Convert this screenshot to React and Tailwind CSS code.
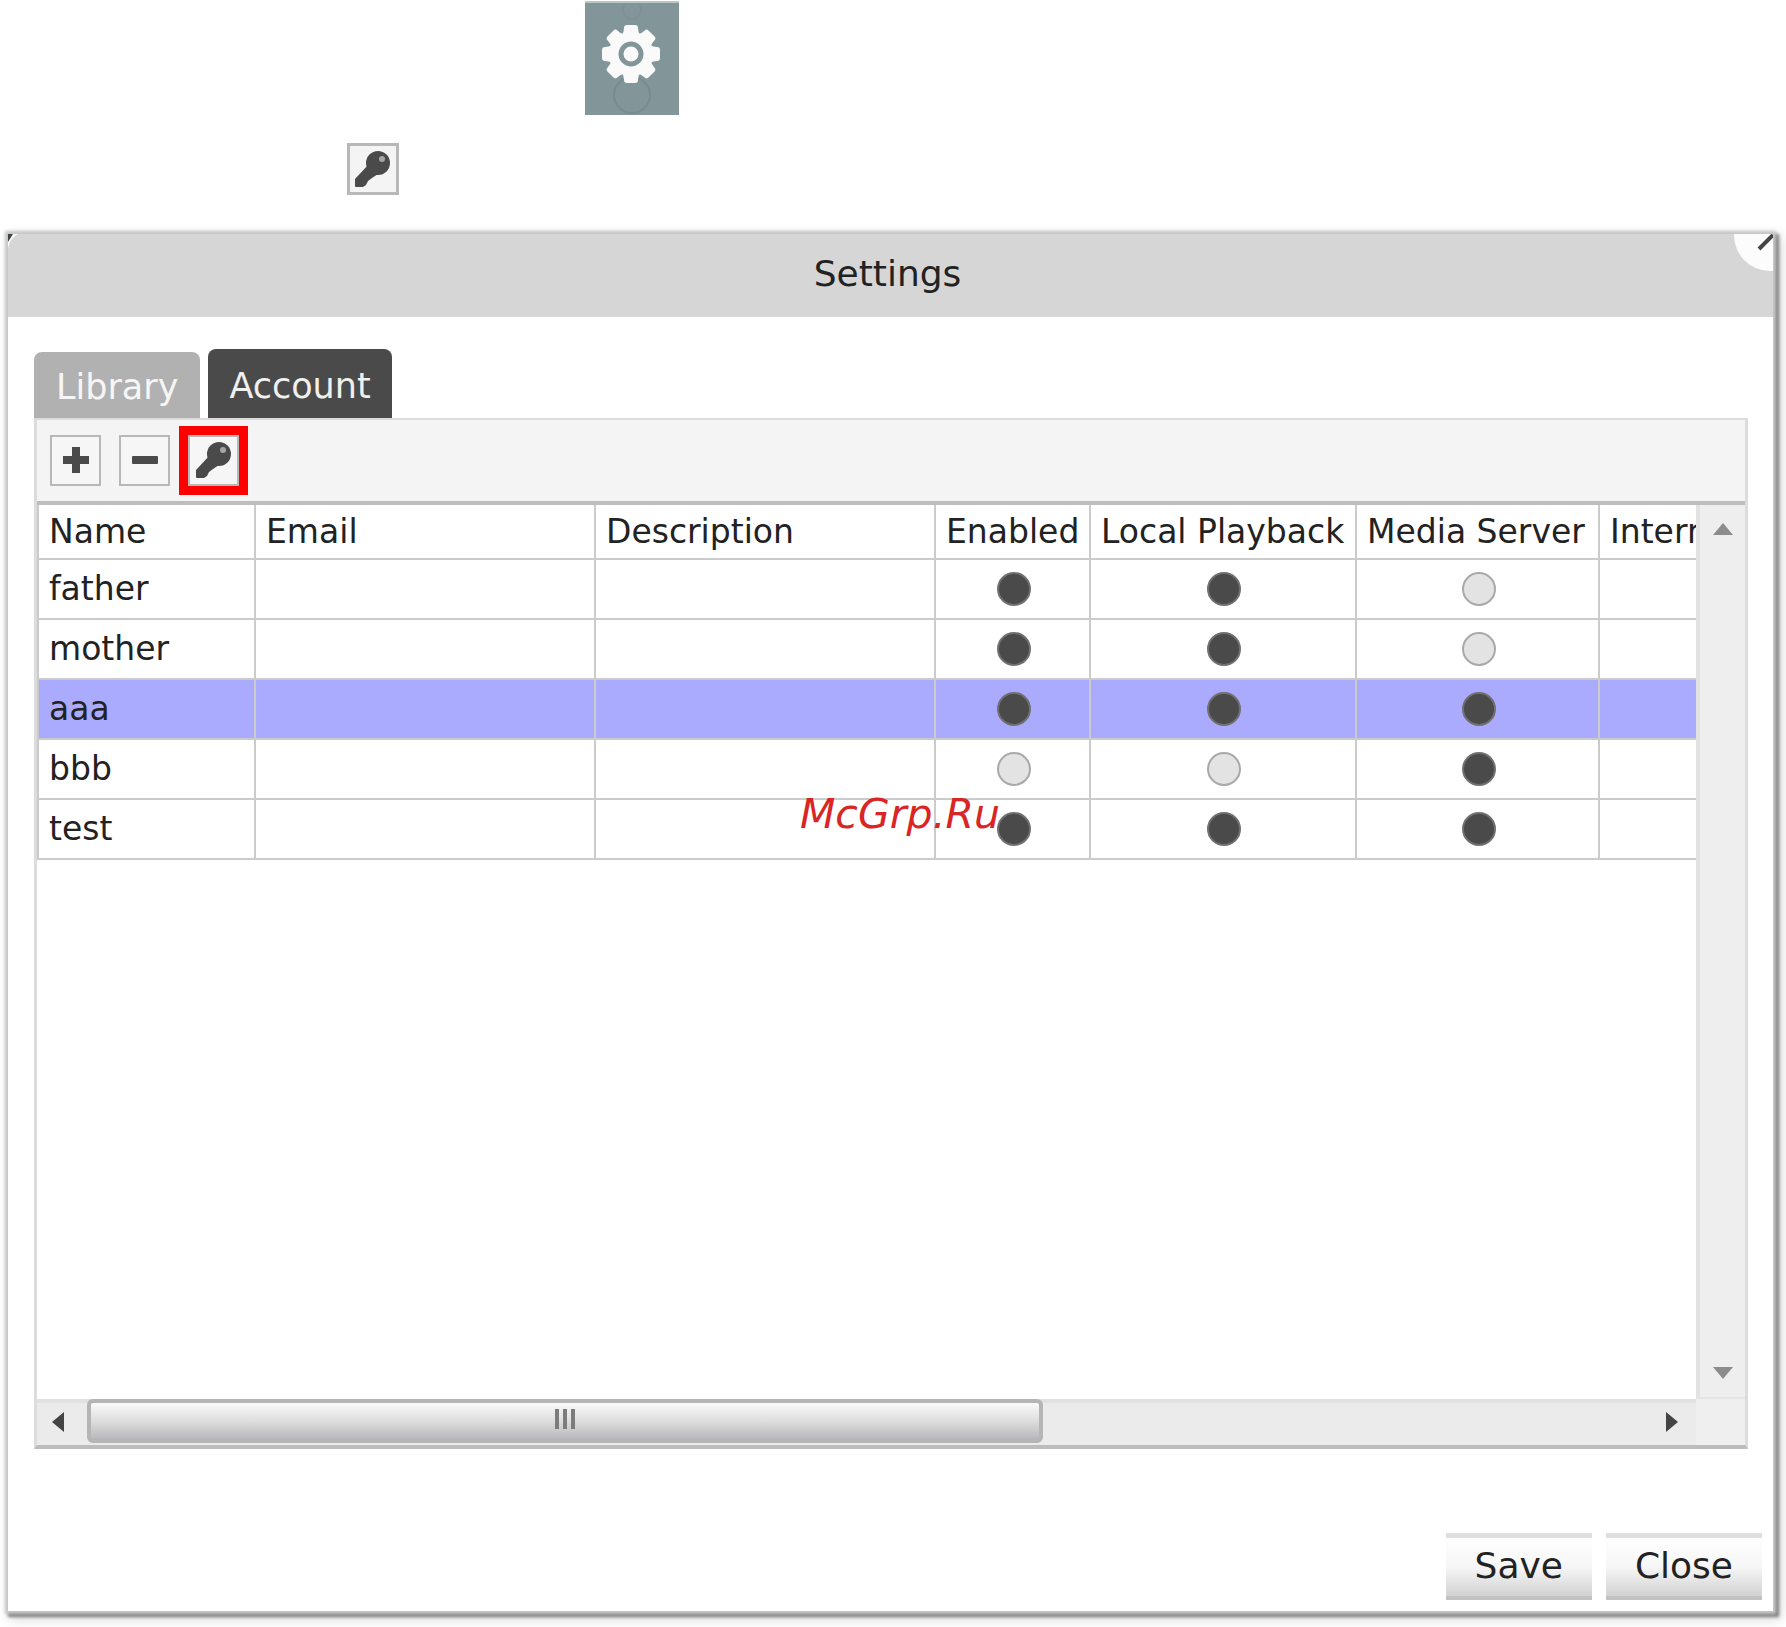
import React, { useState } from 'react';

const COLUMNS = [
  { key: 'name', label: 'Name', width: 'w-[217px]' },
  { key: 'email', label: 'Email', width: 'w-[340px]' },
  { key: 'description', label: 'Description', width: 'w-[340px]' },
  { key: 'enabled', label: 'Enabled', width: 'w-[155px]', flag: true },
  { key: 'playback', label: 'Local Playback', width: 'w-[266px]', flag: true },
  { key: 'media', label: 'Media Server', width: 'w-[243px]', flag: true },
  { key: 'internet', label: 'Internet', width: 'w-[240px]' },
];

const ACCOUNTS = [
  { name: 'father', enabled: true, playback: true, media: false },
  { name: 'mother', enabled: true, playback: true, media: false },
  { name: 'aaa', enabled: true, playback: true, media: true },
  { name: 'bbb', enabled: false, playback: false, media: true },
  { name: 'test', enabled: true, playback: true, media: true },
];

function GearTile() {
  return (
    <button
      type="button"
      aria-label="Settings"
      className="mt-px ml-[585px] block h-[114px] w-[94px] border-t-2 border-[#b9c6c7] bg-[#82969a]"
    >
      <svg viewBox="0 0 94 112" className="h-full w-full" aria-hidden="true">
        <circle cx="47" cy="7" r="9" fill="none" stroke="#7d9195" strokeWidth="2" />
        <circle cx="47" cy="92" r="18" fill="none" stroke="#788c90" strokeWidth="2" />
        <g fill="#fafafa" transform="translate(46 51)">
          <circle r="22" />
          {[0, 45, 90, 135, 180, 225, 270, 315].map((angle) => (
            <path
              key={angle}
              transform={`rotate(${angle})`}
              d="M-9 -19 Q-7 -22 -7 -26 Q-7 -29 -4 -29 H4 Q7 -29 7 -26 Q7 -22 9 -19 Z"
            />
          ))}
        </g>
        <circle cx="46" cy="51" r="10" fill="none" stroke="#82969a" strokeWidth="5" />
      </svg>
    </button>
  );
}

function KeyIcon() {
  return (
    <svg viewBox="0 0 36 36" className="h-9 w-9" aria-hidden="true">
      <path d="M0 28 L14 13 L23 23 L17 27 L13 30 L11 34 L8 36 H1 Q0 36 0 35 Z" fill="#4a4a4a" />
      <circle cx="23" cy="12" r="12" fill="#4a4a4a" />
      <circle cx="27" cy="8" r="3" fill="#a6a6a6" />
    </svg>
  );
}

function ToolButton({ label, children }) {
  return (
    <button
      type="button"
      aria-label={label}
      className="flex h-[51px] w-[51px] items-center justify-center border-2 border-[#b8b8b8] bg-[#f6f6f6]"
    >
      {children}
    </button>
  );
}

function Dot({ on }) {
  return (
    <span
      role="img"
      aria-label={on ? 'Yes' : 'No'}
      className={`mx-auto block h-[34px] w-[34px] rounded-full border-2 ${
        on ? 'border-[#707070] bg-[#4a4a4a]' : 'border-[#a9a9a9] bg-[#e3e3e3]'
      }`}
    />
  );
}

function AccountTable({ selected, onSelect }) {
  return (
    <table className="w-max table-fixed border-separate border-spacing-0 border-l-2 border-[#cbcbcb] text-[33px] leading-10">
      <thead>
        <tr className="h-[55px]">
          {COLUMNS.map((col) => (
            <th
              key={col.key}
              scope="col"
              className={`${col.width} border-r-2 border-b-2 border-[#cbcbcb] pr-2 pl-[10px] py-0 text-left font-normal whitespace-nowrap`}
            >
              {col.label}
            </th>
          ))}
        </tr>
      </thead>
      <tbody>
        {ACCOUNTS.map((account) => (
          <tr
            key={account.name}
            onClick={() => onSelect(account.name)}
            className={`h-[60px] ${account.name === selected ? 'bg-[#aaaaff]' : 'bg-white'}`}
          >
            {COLUMNS.map((col) => (
              <td key={col.key} className="border-r-2 border-b-2 border-[#cbcbcb] pr-2 pl-[10px] py-0">
                {col.flag ? <Dot on={account[col.key]} /> : account[col.key]}
              </td>
            ))}
          </tr>
        ))}
      </tbody>
    </table>
  );
}

function VerticalScrollbar() {
  return (
    <div className="flex w-[49px] shrink-0 flex-col justify-between border-l-4 border-[#e2e2e2] bg-[#eeeeee]">
      <button type="button" aria-label="Scroll up" className="flex h-12 items-center justify-center">
        <svg viewBox="0 0 20 12" className="h-3 w-5" aria-hidden="true">
          <path d="M0 12 L10 0 L20 12 Z" fill="#8c8c8c" />
        </svg>
      </button>
      <button type="button" aria-label="Scroll down" className="flex h-[50px] items-center justify-center border-b-2 border-[#e4e4e4]">
        <svg viewBox="0 0 20 12" className="h-3 w-5" aria-hidden="true">
          <path d="M0 0 L10 12 L20 0 Z" fill="#8c8c8c" />
        </svg>
      </button>
    </div>
  );
}

function HorizontalScrollbar() {
  return (
    <div className="flex h-[46px] bg-[#efefef]">
      <div className="flex min-w-0 flex-1 border-t-4 border-[#e1e1e1] bg-[#ebebeb]">
        <button type="button" aria-label="Scroll left" className="flex w-[42px] items-center justify-center pb-1">
          <svg viewBox="0 0 12 20" className="h-5 w-3" aria-hidden="true">
            <path d="M12 0 L0 10 L12 20 Z" fill="#444" />
          </svg>
        </button>
        <div className="-mt-1 ml-2 flex h-11 w-[956px] items-center justify-center gap-1 rounded-md border-4 border-[#b5b5b5] bg-linear-to-b from-[#fafafa] via-[#dedede] to-[#b8b8bb] pb-1">
          <span className="h-5 w-1 bg-[#7c7c7c]" />
          <span className="h-5 w-1 bg-[#7c7c7c]" />
          <span className="h-5 w-1 bg-[#7c7c7c]" />
        </div>
        <button type="button" aria-label="Scroll right" className="ml-auto flex w-12 items-center justify-center pb-1">
          <svg viewBox="0 0 12 20" className="h-5 w-3" aria-hidden="true">
            <path d="M0 0 L12 10 L0 20 Z" fill="#444" />
          </svg>
        </button>
      </div>
      <div className="w-[49px] shrink-0" />
    </div>
  );
}

function FooterButton({ children }) {
  return (
    <button
      type="button"
      className="border-t-[5px] border-b-4 border-t-[#dfdfdf] border-b-[#c2c2c2] bg-linear-to-b from-white via-[#f6f6f6] to-[#d2d2d2] px-[29px] pt-2 pb-[10px] text-4xl leading-10"
    >
      {children}
    </button>
  );
}

function App() {
  const [tab, setTab] = useState('account');
  const [selected, setSelected] = useState('aaa');

  return (
    <div className="relative flex min-h-screen flex-col overflow-hidden bg-white font-['DejaVu_Sans',Verdana,sans-serif] text-[#222]">
      <GearTile />
      <button
        type="button"
        aria-label="Password"
        className="mt-7 ml-[347px] flex h-[52px] w-[52px] items-center justify-center border-3 border-[#b8b8b8] bg-[#f4f4f4]"
      >
        <KeyIcon />
      </button>

      <section className="mt-[39px] mr-[13px] mb-4 ml-2 flex flex-1 flex-col bg-white shadow-[0_0_3px_3px_#c8c8c8,3px_3px_3px_3px_#7c7c7c,5px_5px_12px_3px_#0000002a]">
        <header className="relative flex h-[83px] items-center justify-center overflow-hidden bg-[#d6d6d6] pr-[6px] pb-1">
          <h1 className="text-4xl">Settings</h1>
          <svg viewBox="0 0 10 14" className="absolute top-0 left-0 h-[14px] w-[10px]" aria-hidden="true">
            <path d="M0 0 H10 Q2 4 0 14 Z" fill="#fff" />
            <path d="M0 0 H5 L0 8 Z" fill="#3c4648" />
          </svg>
          <button type="button" aria-label="Close dialog" className="absolute top-0 right-0">
            <svg viewBox="0 0 40 40" className="h-10 w-10" aria-hidden="true">
              <circle cx="37" cy="1" r="36" fill="#fcfcfc" />
              <path d="M26 15 L40 1" stroke="#444" strokeWidth="4" />
            </svg>
          </button>
        </header>

        <div className="flex flex-1 flex-col pt-8 pr-[25px] pl-[26px]">
          <div role="tablist" className="flex items-end gap-2 text-[35px] leading-10">
            <button
              type="button"
              role="tab"
              aria-selected={tab === 'library'}
              onClick={() => setTab('library')}
              className="h-[66px] rounded-t-lg bg-[#b1b1b1] px-[22px] pt-1 text-[#f6f6f6]"
            >
              Library
            </button>
            <button
              type="button"
              role="tab"
              aria-selected={tab === 'account'}
              onClick={() => setTab('account')}
              className="h-[69px] rounded-t-lg bg-[#4a4a4a] px-[21px] pt-1 text-[#f0f0f0]"
            >
              Account
            </button>
          </div>

          <div className="flex flex-1 flex-col border-x-3 border-t-2 border-b-4 border-x-[#dcdcdc] border-t-[#dcdcdc] border-b-[#bcbcbc]">
            <div className="flex h-[81px] items-center bg-[#f4f4f4] pb-px pl-[13px]">
              <ToolButton label="Add account">
                <svg viewBox="0 0 26 26" className="h-[26px] w-[26px]" aria-hidden="true">
                  <path d="M9 0 H17 V9 H26 V17 H17 V26 H9 V17 H0 V9 H9 Z" fill="#4a4a4a" />
                </svg>
              </ToolButton>
              <div className="ml-[18px]">
                <ToolButton label="Remove account">
                  <svg viewBox="0 0 26 8" className="h-2 w-[26px]" aria-hidden="true">
                    <rect width="26" height="8" rx="1" fill="#4a4a4a" />
                  </svg>
                </ToolButton>
              </div>
              <div className="ml-[9px] border-9 border-[#ff0000]">
                <ToolButton label="Change password">
                  <KeyIcon />
                </ToolButton>
              </div>
            </div>

            <div className="flex flex-1 border-t-4 border-[#bdbdbd]">
              <div className="min-w-0 flex-1 overflow-hidden">
                <AccountTable selected={selected} onSelect={setSelected} />
              </div>
              <VerticalScrollbar />
            </div>
            <HorizontalScrollbar />
          </div>
        </div>

        <footer className="flex justify-end gap-[14px] pt-[84px] pr-[11px] pb-[11px]">
          <FooterButton>Save</FooterButton>
          <FooterButton>Close</FooterButton>
        </footer>
      </section>

      <span className="pointer-events-none absolute top-[790px] left-[800px] text-[41px] leading-12 text-[#d92525] italic">
        McGrp.Ru
      </span>
    </div>
  );
}

export default App;
